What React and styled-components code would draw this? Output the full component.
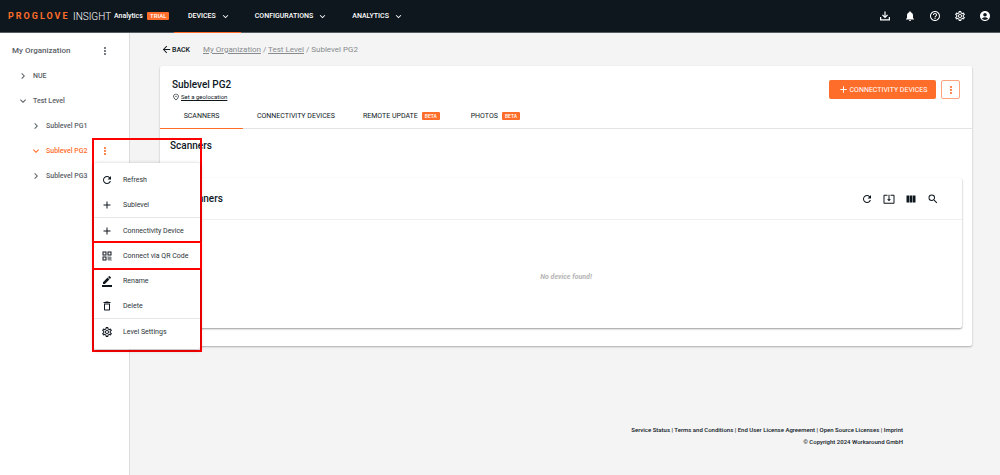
import React from 'react';
import styled, { createGlobalStyle } from 'styled-components';
import {
  MdAccountCircle,
  MdAdd,
  MdArrowBack,
  MdBorderColor,
  MdChevronRight,
  MdDeleteOutline,
  MdExpandMore,
  MdHelpOutline,
  MdMoreVert,
  MdNotifications,
  MdOutlinePlace,
  MdOutlineSettings,
  MdQrCode,
  MdRefresh,
  MdSearch,
  MdSystemUpdateAlt,
  MdViewColumn,
} from 'react-icons/md';

const orange = '#ff6d2a';
const dark = '#0e171e';
const red = '#ff0000';

const GlobalStyle = createGlobalStyle`
* {
  box-sizing: border-box;
}
body {
  margin: 0;
  background: #f4f4f4;
  color: ${dark};
  font-family: Roboto, "Liberation Sans", sans-serif;
  font-size: 7px;
}
button {
  margin: 0;
  padding: 0;
  border: 0;
  background: none;
  color: inherit;
  font: inherit;
  cursor: pointer;
}
a {
  color: inherit;
}
h1, h2, h3, p, ul, ol {
  margin: 0;
  padding: 0;
  font-weight: 500;
}
ul, ol {
  list-style: none;
}
svg {
  display: block;
  flex: none;
}
`;

const Page = styled.div`
display: flex;
flex-direction: column;
min-height: 100vh;
`;

const Header = styled.header`
display: flex;
align-items: stretch;
height: 33px;
padding: 0 9px 0 8px;
background: ${dark};
border-bottom: 1px solid #565c61;
color: #fff;
`;

const Brand = styled.div`
display: flex;
align-items: center;
width: 166px;
`;

const LogoName = styled.span`
width: 65px;
color: ${orange};
font-size: 9px;
font-weight: 700;
letter-spacing: 2px;
`;

const LogoProduct = styled.span`
width: 41px;
font-size: 10px;
font-weight: 300;
`;

const LogoApp = styled.span`
width: 33px;
font-weight: 500;
`;

const Badge = styled.span`
padding: 0 3px;
border-radius: 1px;
background: ${orange};
color: #fff;
font-size: ${(props) => (props.$large ? '6px' : '5px')};
font-weight: 500;
line-height: 8px;
`;

const Nav = styled.nav`
display: flex;
flex: 1;
`;

const NavItem = styled.button`
display: flex;
align-items: center;
gap: 4px;
margin-bottom: -1px;
padding: 0 10px 0 14px;
border-bottom: 1px solid ${(props) => (props.$active ? orange : 'transparent')};
font-weight: 500;
`;

const HeaderActions = styled.div`
display: flex;
align-items: center;
gap: 13px;
`;

const Body = styled.div`
display: flex;
flex: 1;
`;

const Sidebar = styled.aside`
flex: none;
width: 130px;
padding-top: 5px;
border-right: 1px solid #dcdcdc;
background: #fff;
color: #5a6066;
`;

const TreeRow = styled.li`
position: relative;
display: flex;
align-items: center;
height: 25px;
padding-left: ${(props) => [12, 17, 30][props.$level]}px;
color: ${(props) => (props.$selected ? orange : 'inherit')};
font-size: ${(props) => (props.$level === 0 ? 8 : 7)}px;
font-weight: 500;
`;

const TreeButton = styled.button`
display: flex;
align-items: center;
gap: 4px;
`;

const RowMenuButton = styled.button`
margin-left: auto;
margin-right: 18px;
`;

const MenuFrame = styled.div`
position: absolute;
z-index: 2;
top: 0;
left: 92px;
width: 110px;
padding: 23px 0 1px;
border: 2px solid ${red};
pointer-events: none;
`;

const Menu = styled.ul`
padding: 4px 0 5px;
border-radius: 2px;
background: #fff;
box-shadow: 0 1px 4px rgba(0, 0, 0, 0.3);
pointer-events: auto;
`;

const MenuRow = styled.li`
border-top: ${(props) => (props.$divided ? '1px solid #e8e8e8' : '0')};
outline: ${(props) => (props.$framed ? `2px solid ${red}` : 'none')};
`;

const MenuButton = styled.button`
display: flex;
align-items: center;
gap: 10px;
width: 100%;
height: 25px;
padding-left: 7px;
color: #2b3339;
font-weight: 400;

svg {
  color: ${dark};
}
`;

const Main = styled.main`
display: flex;
flex: 1;
flex-direction: column;
min-width: 0;
padding: 0 28px 0 30px;
`;

const Crumbs = styled.div`
display: flex;
align-items: center;
height: 33px;
padding-left: 1px;
color: #878b8e;
font-size: 8px;
`;

const BackButton = styled.button`
display: flex;
align-items: center;
width: 42px;
color: ${dark};
font-size: 7px;
font-weight: 500;
`;

const Card = styled.section`
padding-bottom: 18px;
border-radius: 2px;
background: #fff;
box-shadow: 0 1px 2px rgba(0, 0, 0, 0.3);
`;

const CardHead = styled.div`
display: flex;
justify-content: space-between;
height: 38px;
padding: 12px 12px 0;
`;

const Title = styled.h1`
font-size: 10px;
line-height: 14px;
`;

const GeoLink = styled.a`
display: flex;
align-items: center;
gap: 1px;
font-size: 6px;
line-height: 10px;
`;

const HeadActions = styled.div`
display: flex;
gap: 5px;
padding-top: 2px;
`;

const PrimaryButton = styled.button`
display: flex;
align-items: center;
justify-content: center;
gap: 1px;
width: 107px;
height: 19px;
border-radius: 2px;
background: ${orange};
color: #fff;
`;

const OutlineButton = styled.button`
display: flex;
align-items: center;
justify-content: center;
width: 19px;
height: 19px;
border: 1px solid #ffa57c;
border-radius: 2px;
color: ${orange};
`;

const Tabs = styled.div`
display: flex;
height: 25px;
border-bottom: 1px solid #e4e4e4;
`;

const Tab = styled.button`
display: flex;
align-items: center;
justify-content: center;
gap: 4px;
min-width: 83px;
margin-bottom: -1px;
padding: 0 14px;
border-bottom: 1px solid ${(props) => (props.$active ? orange : 'transparent')};
`;

const SectionTitle = styled.h2`
height: 49px;
padding: 10px 10px 0;
font-size: 10px;
line-height: 14px;
`;

const Panel = styled.div`
margin: 0 10px;
border-radius: 2px;
box-shadow: 0 1px 2px rgba(0, 0, 0, 0.4);
`;

const PanelHead = styled.div`
display: flex;
align-items: center;
justify-content: space-between;
height: 42px;
padding: 0 23px 0 11px;
border-bottom: 1px solid #f0f0f0;
`;

const PanelTitle = styled.h3`
font-size: 10px;
line-height: 14px;
`;

const PanelTools = styled.div`
display: flex;
align-items: center;
gap: 10px;
`;

const Empty = styled.p`
padding: 52px 0 46px;
color: #b4b4b4;
font-style: italic;
font-weight: 700;
line-height: 10px;
text-align: center;
`;

const Footer = styled.footer`
margin-top: auto;
padding: 0 69px 27px 0;
font-size: 6px;
line-height: 12px;
text-align: right;

a {
  text-decoration: none;
}
`;

// arrow dropping into an open tray
const DownloadIcon = ({ size }) => (
  <svg width={size} height={size} viewBox="0 0 24 24" fill="currentColor">
    <path d="M19.5 14v4.5h-15V14H2v7h20v-7h-2.500zM18 10.500l-1.600-1.600-3.200 3.100V3h-2.400v9L7.600 8.900 6 10.500l6 6 6-6z" />
  </svg>
);

const NAV = ['DEVICES', 'CONFIGURATIONS', 'ANALYTICS'];

const ACTIONS = [
  { label: 'Downloads', Icon: DownloadIcon },
  { label: 'Notifications', Icon: MdNotifications },
  { label: 'Help', Icon: MdHelpOutline },
  { label: 'Settings', Icon: MdOutlineSettings },
  { label: 'Account', Icon: MdAccountCircle },
];

const TREE = [
  { label: 'My Organization', level: 0, menu: true },
  { label: 'NUE', level: 1 },
  { label: 'Test Level', level: 1, open: true },
  { label: 'Sublevel PG1', level: 2 },
  { label: 'Sublevel PG2', level: 2, open: true, selected: true, menu: true },
  { label: 'Sublevel PG3', level: 2 },
];

const MENU = [
  { label: 'Refresh', Icon: MdRefresh },
  { label: 'Sublevel', Icon: MdAdd },
  { label: 'Connectivity Device', Icon: MdAdd, divided: true },
  { label: 'Connect via QR Code', Icon: MdQrCode, framed: true },
  { label: 'Rename', Icon: MdBorderColor },
  { label: 'Delete', Icon: MdDeleteOutline },
  { label: 'Level Settings', Icon: MdOutlineSettings, divided: true },
];

const TABS = [
  { label: 'SCANNERS', active: true },
  { label: 'CONNECTIVITY DEVICES' },
  { label: 'REMOTE UPDATE', beta: true },
  { label: 'PHOTOS', beta: true },
];

const TOOLS = [
  { label: 'Refresh', Icon: MdRefresh },
  { label: 'Export', Icon: MdSystemUpdateAlt },
  { label: 'Columns', Icon: MdViewColumn },
  { label: 'Search', Icon: MdSearch },
];

const LINKS = [
  'Service Status',
  'Terms and Conditions',
  'End User License Agreement',
  'Open Source Licenses',
  'Imprint',
];

const TopBar = () => (
  <Header>
    <Brand>
      <LogoName>PROGLOVE</LogoName>
      <LogoProduct>INSIGHT</LogoProduct>
      <LogoApp>Analytics</LogoApp>
      <Badge $large>TRIAL</Badge>
    </Brand>
    <Nav>
      {NAV.map((label, i) => (
        <NavItem key={label} $active={i === 0}>
          {label}
          <MdExpandMore size={11} />
        </NavItem>
      ))}
    </Nav>
    <HeaderActions>
      {ACTIONS.map(({ label, Icon }) => (
        <button key={label} aria-label={label}>
          <Icon size={12} />
        </button>
      ))}
    </HeaderActions>
  </Header>
);

const ContextMenu = () => (
  <MenuFrame>
    <Menu>
      {MENU.map(({ label, Icon, divided, framed }) => (
        <MenuRow key={label} $divided={divided} $framed={framed}>
          <MenuButton>
            <Icon size={12} />
            {label}
          </MenuButton>
        </MenuRow>
      ))}
    </Menu>
  </MenuFrame>
);

const Tree = () => (
  <Sidebar>
    <ul>
      {TREE.map(({ label, level, open, selected, menu }) => (
        <TreeRow key={label} $level={level} $selected={selected}>
          <TreeButton>
            {level > 0 && (open ? <MdExpandMore size={12} /> : <MdChevronRight size={12} />)}
            {label}
          </TreeButton>
          {menu && (
            <RowMenuButton aria-label={`${label} menu`}>
              <MdMoreVert size={12} />
            </RowMenuButton>
          )}
          {selected && <ContextMenu />}
        </TreeRow>
      ))}
    </ul>
  </Sidebar>
);

const ScannersPanel = () => (
  <Panel>
    <PanelHead>
      <PanelTitle>Scanners</PanelTitle>
      <PanelTools>
        {TOOLS.map(({ label, Icon }) => (
          <button key={label} aria-label={label}>
            <Icon size={12} />
          </button>
        ))}
      </PanelTools>
    </PanelHead>
    <Empty>No device found!</Empty>
  </Panel>
);

const App = () => (
  <>
    <GlobalStyle />
    <Page>
      <TopBar />
      <Body>
        <Tree />
        <Main>
          <Crumbs>
            <BackButton>
              <MdArrowBack size={11} />
              BACK
            </BackButton>
            <span>
              <a href="#organization">My Organization</a>
              {' / '}
              <a href="#level">Test Level</a>
              {' / Sublevel PG2'}
            </span>
          </Crumbs>
          <Card>
            <CardHead>
              <div>
                <Title>Sublevel PG2</Title>
                <GeoLink href="#geolocation">
                  <MdOutlinePlace size={8} />
                  Set a geolocation
                </GeoLink>
              </div>
              <HeadActions>
                <PrimaryButton>
                  <MdAdd size={11} />
                  CONNECTIVITY DEVICES
                </PrimaryButton>
                <OutlineButton aria-label="More actions">
                  <MdMoreVert size={12} />
                </OutlineButton>
              </HeadActions>
            </CardHead>
            <Tabs>
              {TABS.map(({ label, active, beta }) => (
                <Tab key={label} $active={active}>
                  {label}
                  {beta && <Badge>BETA</Badge>}
                </Tab>
              ))}
            </Tabs>
            <SectionTitle>Scanners</SectionTitle>
            <ScannersPanel />
          </Card>
          <Footer>
            <p>
              {LINKS.map((label, i) => (
                <React.Fragment key={label}>
                  {i > 0 && ' | '}
                  <a href="#footer">{label}</a>
                </React.Fragment>
              ))}
            </p>
            <p>© Copyright 2024 Workaround GmbH</p>
          </Footer>
        </Main>
      </Body>
    </Page>
  </>
);

export default App;
